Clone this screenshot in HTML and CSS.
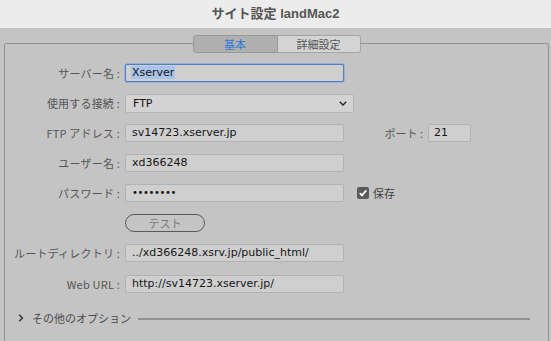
FILE: index.html
```html
<!DOCTYPE html>
<html lang="ja">
<head>
<meta charset="utf-8">
<title>サイト設定</title>
<link rel="stylesheet" href="styles.css">
</head>
<body>
<div class="titlebar">サイト設定 landMac2</div>
<div class="panel">
  <div class="tabs">
    <span class="tab active">基本</span>
    <span class="tab">詳細設定</span>
  </div>
  <div class="form">
    <div class="row">
      <span class="label">サーバー名 :</span>
      <span class="field focus"><span class="sel">Xserver</span></span>
    </div>
    <div class="row">
      <span class="label">使用する接続 :</span>
      <span class="field select">FTP
        <svg class="caret" width="8" height="5" viewBox="0 0 8 5"><path d="M0.8 0.8 L4 4 L7.2 0.8" fill="none" stroke="#222" stroke-width="1.3"/></svg>
      </span>
    </div>
    <div class="row">
      <span class="label">FTP アドレス :</span>
      <span class="field">sv14723.xserver.jp</span>
      <span class="port-label">ポート :</span>
      <span class="field port">21</span>
    </div>
    <div class="row">
      <span class="label">ユーザー名 :</span>
      <span class="field">xd366248</span>
    </div>
    <div class="row">
      <span class="label">パスワード :</span>
      <span class="field dots">••••••••</span>
      <span class="check">
        <svg width="12" height="12" viewBox="0 0 12 12"><rect x="0" y="0" width="12" height="12" rx="2" fill="#5a5a5a"/><path d="M2.8 6.2 L5 8.4 L9.3 3.4" fill="none" stroke="#fff" stroke-width="1.8"/></svg>
        <span class="check-text">保存</span>
      </span>
    </div>
    <div class="row">
      <span class="label"></span>
      <span class="button">テスト</span>
    </div>
    <div class="row">
      <span class="label">ルートディレクトリ :</span>
      <span class="field">../xd366248.xsrv.jp/public_html/</span>
    </div>
    <div class="row last">
      <span class="label">Web URL :</span>
      <span class="field">http://sv14723.xserver.jp/</span>
    </div>
  </div>
  <div class="more">
    <svg class="more-caret" width="6" height="8" viewBox="0 0 6 8"><path d="M1.2 0.8 L4.4 4 L1.2 7.2" fill="none" stroke="#333" stroke-width="1.4"/></svg>
    <span class="more-text">その他のオプション</span>
    <span class="more-line"></span>
  </div>
</div>
</body>
</html>
```
FILE: styles.css
```css
html, body {
  margin: 0;
  padding: 0;
}
body {
  width: 551px;
  height: 341px;
  overflow: hidden;
  background: #c4c4c4;
  font-family: "Noto Sans CJK JP", sans-serif;
  color: #4e4e4e;
}
.titlebar {
  height: 28px;
  background: #ececec;
  text-align: center;
  font-family: "Liberation Sans", "Noto Sans CJK JP", sans-serif;
  font-weight: bold;
  font-size: 13px;
  line-height: 28px;
  color: #555;
}
.panel {
  box-sizing: border-box;
  margin: 15px 0 0 4px;
  width: 545px;
  height: 298px;
  border: 1px solid #939393;
  border-bottom: none;
  border-radius: 3px 3px 0 0;
}
.tabs {
  display: flex;
  justify-content: center;
  margin-top: -9px;
  height: 18px;
}
.tab {
  box-sizing: border-box;
  height: 18px;
  font-size: 11px;
  line-height: 16px;
  text-align: center;
  border: 1px solid #a3a3a3;
  background: #d4d4d4;
  color: #555;
}
.tab.active {
  width: 85px;
  background: #afafaf;
  color: #2f7ad8;
  border-color: #999;
  border-radius: 3px 0 0 3px;
}
.tab:not(.active) {
  width: 83px;
  border-left: none;
  border-radius: 0 3px 3px 0;
}
.form {
  display: flex;
  flex-direction: column;
  gap: 12px;
  margin-top: 11px;
}
.row {
  display: flex;
  align-items: center;
  height: 18px;
}
.row.last {
  margin-top: 1px;
}
.label {
  width: 115px;
  flex: none;
  text-align: right;
  font-size: 11px;
  color: #555;
  margin-right: 5px;
  white-space: nowrap;
  letter-spacing: 0.2px;
}
.field {
  box-sizing: border-box;
  width: 219px;
  height: 18px;
  flex: none;
  background: #cfcfcf;
  border: 1px solid #b3b3b3;
  border-radius: 2px;
  font-family: "DejaVu Sans", sans-serif;
  font-size: 11px;
  line-height: 16px;
  color: #161616;
  padding-left: 6px;
  white-space: nowrap;
  overflow: hidden;
}
.field.focus {
  border-color: #4f7fcf;
  box-shadow: 0 0 0 0.5px #6f98dc;
  padding-left: 5px;
}
.sel {
  background: #a9c3eb;
  padding: 0 1px;
}
.field.select {
  width: 229px;
  height: 19px;
  line-height: 17px;
  background: #d3d3d3;
  display: flex;
  align-items: center;
  justify-content: space-between;
  padding-left: 7px;
  padding-right: 6px;
}
.caret {
  display: block;
}
.port-label {
  width: 79px;
  flex: none;
  text-align: right;
  font-size: 11px;
  color: #555;
  margin-right: 5px;
}
.field.port {
  width: 43px;
  padding-left: 5px;
}
.dots {
  font-size: 10px;
  letter-spacing: -0.4px;
}
.check {
  display: flex;
  align-items: center;
  margin-left: 13px;
  gap: 4px;
}
.check svg {
  display: block;
}
.check-text {
  font-size: 11px;
  color: #3e3e3e;
}
.button {
  box-sizing: border-box;
  width: 80px;
  height: 18px;
  border: 1px solid #595959;
  border-radius: 9px;
  text-align: center;
  font-size: 11px;
  line-height: 16px;
  color: #777;
}
.more {
  display: flex;
  align-items: center;
  margin-top: 18px;
  height: 14px;
}
.more-caret {
  display: block;
  margin-left: 13px;
}
.more-text {
  font-size: 11px;
  color: #4a4a4a;
  margin-left: 8px;
  white-space: nowrap;
}
.more-line {
  display: block;
  width: 392px;
  height: 2px;
  background: #929292;
  margin-left: 7px;
  margin-top: 2px;
}
```
